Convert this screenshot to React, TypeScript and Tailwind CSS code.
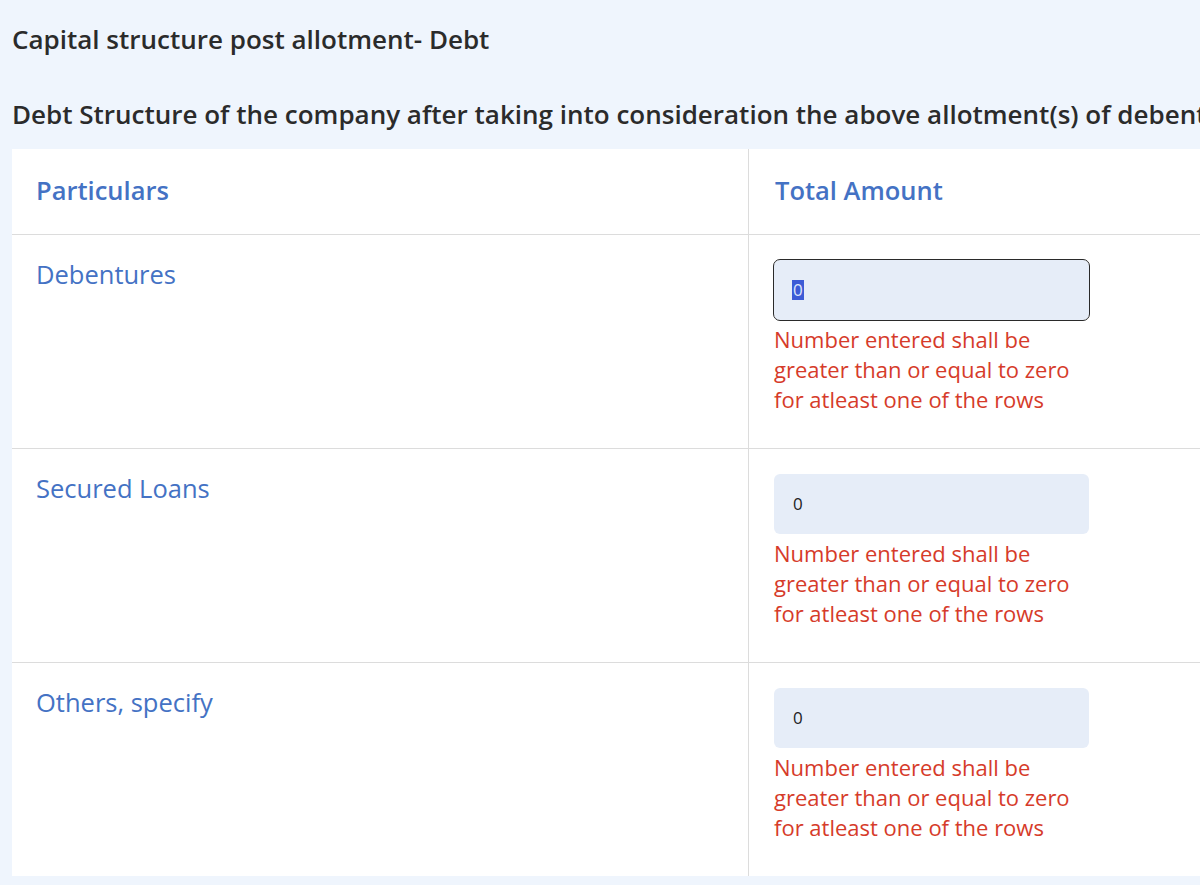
import React from "react";

const rows = [
  { label: "Debentures", focused: true },
  { label: "Secured Loans", focused: false },
  { label: "Others, specify", focused: false },
];

function AmountInput({ focused }: { focused: boolean }) {
  return (
    <div
      className={
        "flex h-[60px] w-[315px] items-center rounded-md bg-[#e6edf8] pl-[18px] text-[17px] text-[#222] " +
        (focused ? "outline-[1.5px] outline-solid outline-[#2a2a2a]" : "")
      }
    >
      {focused ? (
        <span className="bg-[#3d5bd6] px-px leading-[20px] text-[#dfe6fb]">0</span>
      ) : (
        <span className="px-px">0</span>
      )}
    </div>
  );
}

export default function App() {
  return (
    <div
      className="min-h-screen overflow-hidden bg-[#eff5fd] pl-3"
      style={{ fontFamily: '"Open Sans", "Noto Sans", sans-serif' }}
    >
      <h2 className="pt-[24px] text-[26px] font-semibold leading-[30px] text-[#2b2b2b]">
        Capital structure post allotment- Debt
      </h2>
      <h3 className="mt-[45px] whitespace-nowrap text-[26px] font-semibold leading-[30px] text-[#2b2b2b]">
        Debt Structure of the company after taking into consideration the above allotment(s) of debentures
      </h3>

      <div className="mt-[20px] w-[1400px] bg-white">
        {/* header */}
        <div className="grid grid-cols-[737px_1fr] border-b border-[#dcdcdc]">
          <div className="flex h-[85px] items-center border-r border-[#dcdcdc] pb-[3px] pl-6 text-[25.5px] font-semibold text-[#4472c4]">
            Particulars
          </div>
          <div className="flex h-[85px] items-center pb-[3px] pl-[26px] text-[25.5px] font-semibold text-[#4472c4]">
            Total Amount
          </div>
        </div>

        {rows.map((r, i) => (
          <div
            key={r.label}
            className={
              "grid grid-cols-[737px_1fr] " + (i < rows.length - 1 ? "border-b border-[#dcdcdc]" : "")
            }
          >
            <div className="border-r border-[#dcdcdc] pl-6 pt-[24px] text-[25.5px] leading-[30px] text-[#4472c4]">
              {r.label}
            </div>
            <div className="pb-[34px] pl-[25px] pt-[25px]">
              <AmountInput focused={r.focused} />
              <p className="mt-[4px] w-[316px] text-[22px] leading-[30px] text-[#d63b2a]">
                Number entered shall be greater than or equal to zero for atleast one of the rows
              </p>
            </div>
          </div>
        ))}
      </div>
    </div>
  );
}
